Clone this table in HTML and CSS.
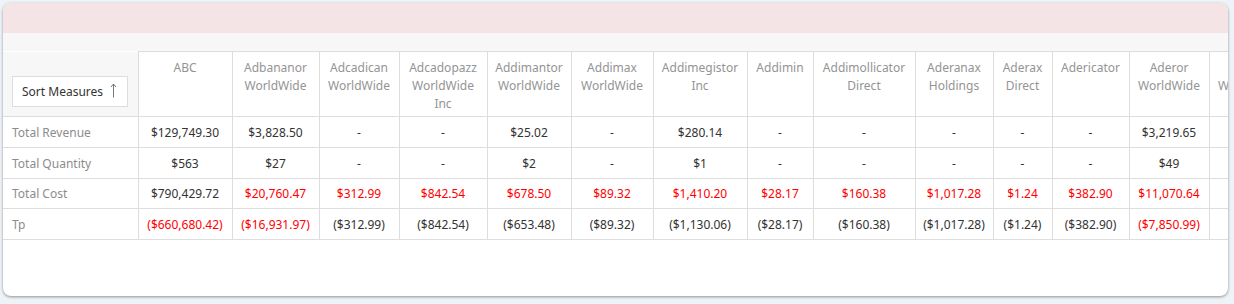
FILE: index.html
```html
<!DOCTYPE html>
<html>
<head>
<meta charset="utf-8">
<link rel="stylesheet" href="styles.css">
</head>
<body>
<div class="card">
  <div class="banner"></div>
  <div class="toolbar"></div>
  <div class="grid-wrap">
    <table class="pivot">
      <colgroup>
        <col class="w-label">
        <col class="w94"><col class="w87"><col class="w80"><col class="w88"><col class="w84">
        <col class="w82"><col class="w94"><col class="w66"><col class="w102"><col class="w78">
        <col class="w59"><col class="w77"><col class="w80"><col class="w80">
      </colgroup>
      <thead>
        <tr>
          <th class="corner"><button class="sort-btn">Sort Measures <svg class="arrow" width="7" height="15" viewBox="0 0 7 15"><path d="M3.5 14.5V1M1 4L3.5 1L6 4" fill="none" stroke="#777" stroke-width="1"/></svg></button></th>
          <th>ABC</th>
          <th>Adbananor WorldWide</th>
          <th>Adcadican WorldWide</th>
          <th>Adcadopazz WorldWide Inc</th>
          <th>Addimantor WorldWide</th>
          <th>Addimax WorldWide</th>
          <th>Addimegistor Inc</th>
          <th>Addimin</th>
          <th>Addimollicator Direct</th>
          <th>Aderanax Holdings</th>
          <th>Aderax Direct</th>
          <th>Adericator</th>
          <th>Aderor WorldWide</th>
          <th>Adesad WorldWide</th>
        </tr>
      </thead>
      <tbody>
        <tr>
          <td class="label">Total Revenue</td>
          <td>$129,749.30</td><td>$3,828.50</td><td>-</td><td>-</td><td>$25.02</td><td>-</td><td>$280.14</td><td>-</td><td>-</td><td>-</td><td>-</td><td>-</td><td>$3,219.65</td><td>-</td>
        </tr>
        <tr>
          <td class="label">Total Quantity</td>
          <td>$563</td><td>$27</td><td>-</td><td>-</td><td>$2</td><td>-</td><td>$1</td><td>-</td><td>-</td><td>-</td><td>-</td><td>-</td><td>$49</td><td>-</td>
        </tr>
        <tr>
          <td class="label">Total Cost</td>
          <td>$790,429.72</td><td class="neg">$20,760.47</td><td class="neg">$312.99</td><td class="neg">$842.54</td><td class="neg">$678.50</td><td class="neg">$89.32</td><td class="neg">$1,410.20</td><td class="neg">$28.17</td><td class="neg">$160.38</td><td class="neg">$1,017.28</td><td class="neg">$1.24</td><td class="neg">$382.90</td><td class="neg">$11,070.64</td><td class="neg">$5.10</td>
        </tr>
        <tr>
          <td class="label">Tp</td>
          <td class="neg">($660,680.42)</td><td class="neg">($16,931.97)</td><td>($312.99)</td><td>($842.54)</td><td>($653.48)</td><td>($89.32)</td><td>($1,130.06)</td><td>($28.17)</td><td>($160.38)</td><td>($1,017.28)</td><td>($1.24)</td><td>($382.90)</td><td class="neg">($7,850.99)</td><td>($5.10)</td>
        </tr>
      </tbody>
    </table>
  </div>
</div>
</body>
</html>
```

FILE: styles.css
```css
* { box-sizing: border-box; }
html, body { margin: 0; padding: 0; }
body {
  background: #eef3f8;
  font-family: "Noto Sans", "Open Sans", sans-serif;
  font-size: 12px;
  color: #333;
  width: 1234px;
  height: 304px;
  overflow: hidden;
}
.card {
  margin: 3px 0 0 3px;
  width: 1225px;
  height: 293px;
  background: #fff;
  border-radius: 8px;
  overflow: hidden;
  box-shadow: 0 1px 3px rgba(0, 0, 0, 0.4);
}
.banner {
  height: 30px;
  background: #f5e4e5;
}
.toolbar {
  height: 18px;
  background: #f7f7f7;
}
.grid-wrap {
  overflow: hidden;
}
.pivot {
  border-collapse: collapse;
  table-layout: fixed;
  width: 1286px;
}
.w-label { width: 135px; }
.w59 { width: 59px; }
.w66 { width: 66px; }
.w77 { width: 77px; }
.w78 { width: 78px; }
.w80 { width: 80px; }
.w82 { width: 82px; }
.w84 { width: 84px; }
.w87 { width: 87px; }
.w88 { width: 88px; }
.w94 { width: 94px; }
.w102 { width: 102px; }
.pivot th {
  height: 65px;
  padding: 7px 6px 0;
  vertical-align: top;
  font-weight: normal;
  color: #949494;
  line-height: 18px;
  text-align: center;
  border: 1px solid #dddddd;
  background: #fff;
}
.pivot th.corner {
  background: #f7f7f7;
  border-top: none;
  border-left: none;
  vertical-align: bottom;
  text-align: left;
  padding: 0 0 9px 9px;
}
.sort-btn {
  font: inherit;
  color: #333;
  background: #fff;
  border: 1px solid #dddddd;
  height: 31px;
  width: 116px;
  padding: 0 0 0 9px;
  text-align: left;
  display: flex;
  align-items: center;
  gap: 7px;
}
.arrow {
  display: block;
  margin-top: -3px;
}
.pivot td {
  height: 30.75px;
  padding: 1px 4px 0;
  text-align: center;
  border: 1px solid #dddddd;
  white-space: nowrap;
  color: #333;
}
.pivot td.label {
  text-align: left;
  padding-left: 9px;
  color: #8c8c8c;
  border-left: none;
}
.pivot td.neg { color: #ff0000; }
```
